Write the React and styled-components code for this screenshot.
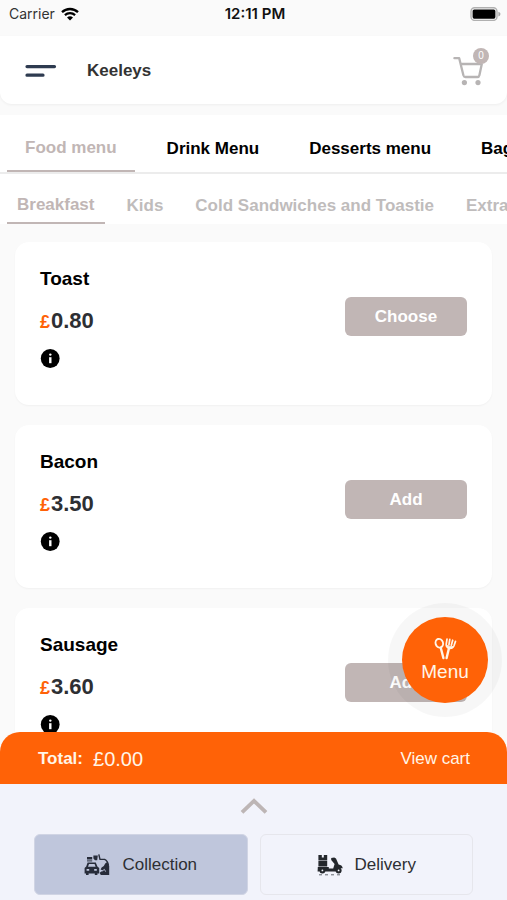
import React, { useState } from "react";
import styled, { createGlobalStyle } from "styled-components";

const Colors = {
  orange: "#ff6207",
  taupe: "#c1b6b5",
  mutedText: "#bfbcbc",
  page: "#fafafa",
  dock: "#f2f3fb",
  selected: "#bfc6dc",
  ink: "#2d2f33",
};

const menus = ["Food menu", "Drink Menu", "Desserts menu", "Bagels"];

const categories = ["Breakfast", "Kids", "Cold Sandwiches and Toastie", "Extras"];

const products = [
  { name: "Toast", price: "0.80", action: "Choose" },
  { name: "Bacon", price: "3.50", action: "Add" },
  { name: "Sausage", price: "3.60", action: "Add" },
];

const WifiIcon = () => (
  <svg width="18" height="14" viewBox="0 0 18 14" fill="none" aria-hidden="true">
    <path d="M1 5.2a11.6 11.6 0 0 1 16 0" stroke="#000" strokeWidth="2.3" />
    <path d="M3.9 8.1a7.4 7.4 0 0 1 10.2 0" stroke="#000" strokeWidth="2.2" />
    <path d="M9 13.6 6 10.6a4.3 4.3 0 0 1 6 0z" fill="#000" />
  </svg>
);

const BatteryIcon = () => (
  <svg width="31" height="14" viewBox="0 0 31 14" aria-hidden="true">
    <rect x="1" y="0.8" width="26" height="12.6" rx="3.6" fill="#fafafa" stroke="#b0b0b0" strokeWidth="1.4" />
    <rect x="2.6" y="2.5" width="22.8" height="9.2" rx="1.6" fill="#000" />
    <path d="M28.4 4.8c1.4.5 2 1.2 2 2.3s-.6 1.8-2 2.3z" fill="#a8a8a8" />
  </svg>
);

const BarsIcon = () => (
  <svg width="32" height="14" viewBox="0 0 32 14" aria-hidden="true">
    <path d="M2 2.6h27.5M2 11.2h16" stroke="#2e3b50" strokeWidth="3.2" strokeLinecap="round" />
  </svg>
);

const CartIcon = () => (
  <svg width="32" height="30" viewBox="0 0 32 30" fill="none" aria-hidden="true">
    <path
      d="M1.4 2.2h4.8l4.2 17q.5 1.8 2 1.8h12q1.6 0 2-1.8L28.8 8H8"
      stroke="#b7b4b4"
      strokeWidth="2.3"
      strokeLinecap="round"
      strokeLinejoin="round"
    />
    <circle cx="11.4" cy="26.6" r="2.6" fill="#b7b4b4" />
    <circle cx="25" cy="26.6" r="2.6" fill="#b7b4b4" />
  </svg>
);

const InfoIcon = () => (
  <svg width="20" height="19" viewBox="0 0 20 19" aria-hidden="true">
    <circle cx="10.2" cy="9.5" r="9.4" fill="#000" />
    <circle cx="10.3" cy="5.6" r="1.2" fill="#fff" />
    <path d="M9.1 8.2h2.4v6H9.1z" fill="#fff" />
  </svg>
);

const CutleryIcon = () => (
  <svg width="24" height="24" viewBox="0 0 24 24" fill="none" stroke="#fff5e8" strokeLinecap="round" aria-hidden="true">
    <ellipse cx="6.3" cy="6.2" rx="3.7" ry="4.4" transform="rotate(-18 6.3 6.2)" strokeWidth="1.9" />
    <path d="M7.8 11 10.4 21" strokeWidth="2.4" />
    <path d="M16 11 13.6 21" strokeWidth="2.4" />
    <path
      d="M14 2.2 13.2 7.4q-.2 3 2.9 4 3.4.5 4.8-2.4l1.6-4.6M16.8 2.4l-.9 5.4M19.7 3.2l-1.4 5"
      strokeWidth="1.7"
      strokeLinejoin="round"
    />
    <path d="M13.8 8.4q3 1.6 6.8 1.2l-2 1.8h-3z" fill="#fff5e8" strokeWidth="0.8" />
  </svg>
);

const ChevronUpIcon = () => (
  <svg width="28" height="16" viewBox="0 0 28 16" fill="none" aria-hidden="true">
    <path d="M2 14.4 14 2.8l12 11.6" stroke="#bdb5b5" strokeWidth="3.8" />
  </svg>
);

const CollectionIcon = () => (
  <svg width="26" height="24" viewBox="0 0 26 24" fill="none" aria-hidden="true">
    <g fill="#272c3a">
      <path d="M3 4h5.2v2.4H3zM9.4 2.4h4.4l-.6 4.8H11L9.4 5.4z" />
      <path d="M3 7.4h5.2v1H3z" />
      <path
        fillRule="evenodd"
        d="M3.6 9.4h8.2l1.6 4.2 1.8 1.4v5.4h-1.8V22h-2.6v-1.6H4.6V22H2v-1.6H.6V15l1.6-1.4zM5 11l-1 2.8h7.6l-1-2.8zM2.6 16v1.8h2.6V16zm7.6 0v1.8h2.6V16z"
      />
      <path d="M17.6 14.6q2.6-1.2 3.6-4.2l2-1.4 2 4V22h-8.4l-1.2-2.2 3.4-2.2-2.4-1z" />
    </g>
    <path d="M14.8 1.4 16 6.4h4.6q3.2 1.4 3.8 6" stroke="#272c3a" strokeWidth="1.4" />
    <path d="M18 18.2l2.4-1.8 1.2 2.2" stroke="#bfc6dc" strokeWidth="0.9" />
  </svg>
);

const DeliveryIcon = () => (
  <svg width="26" height="22" viewBox="0 0 26 22" fill="none" aria-hidden="true">
    <g fill="#24272c">
      <path fillRule="evenodd" d="M1.4 1h8.8v11.4H1.4zM4.8 1v2.6h2V1zM1.4 6.4v.6h8.8v-.6z" />
      <path d="M.8 13h11v1.4h4.4L17.6 10l-3.4-4V4l3-.6 1.8 1 2.6 6.2q3.4.4 4.2 3.6H22l-2.4 3.4H7.8L5 15l-2.6 2.6H.6z" />
      <circle cx="5.4" cy="16.4" r="3" />
      <circle cx="21.6" cy="16.4" r="3" />
    </g>
    <circle cx="5.4" cy="16.4" r="0.9" fill="#f2f3fb" />
    <circle cx="21.6" cy="16.4" r="0.9" fill="#f2f3fb" />
    <path d="M2 20.8h23" stroke="#55585e" strokeWidth="0.9" strokeDasharray="3 3" />
  </svg>
);

const Product = ({ product }) => (
  <Card>
    <div>
      <ProductName>{product.name}</ProductName>
      <Price>
        <Currency>£</Currency>
        {product.price}
      </Price>
      <IconButton aria-label={`About ${product.name}`}>
        <InfoIcon />
      </IconButton>
    </div>
    <ActionButton>{product.action}</ActionButton>
  </Card>
);

export default function App() {
  const [menu, setMenu] = useState(menus[0]);
  const [category, setCategory] = useState(categories[0]);
  const [service, setService] = useState("Collection");

  return (
    <Screen>
      <GlobalStyle />
      <StatusBar>
        <Carrier>
          Carrier <WifiIcon />
        </Carrier>
        <Clock>12:11 PM</Clock>
        <Battery>
          <BatteryIcon />
        </Battery>
      </StatusBar>

      <Header>
        <IconButton aria-label="Open navigation">
          <BarsIcon />
        </IconButton>
        <Title>Keeleys</Title>
        <CartButton aria-label="Cart">
          <CartIcon />
          <Badge>0</Badge>
        </CartButton>
      </Header>

      <MenuTabs>
        {menus.map((m) => (
          <MenuTab key={m} $active={m === menu} onClick={() => setMenu(m)}>
            {m}
          </MenuTab>
        ))}
      </MenuTabs>
      <CategoryTabs>
        {categories.map((c) => (
          <CategoryTab key={c} $active={c === category} onClick={() => setCategory(c)}>
            {c}
          </CategoryTab>
        ))}
      </CategoryTabs>

      <ProductList>
        {products.map((p) => (
          <Product key={p.name} product={p} />
        ))}
      </ProductList>

      <Dock>
        <MenuHalo>
          <MenuButton>
            <CutleryIcon />
            Menu
          </MenuButton>
        </MenuHalo>
        <TotalBar>
          <TotalLabel>Total:</TotalLabel>
          <TotalValue>£0.00</TotalValue>
          <CartLink href="#cart">View cart</CartLink>
        </TotalBar>
        <ServicePanel>
          <Expand aria-label="Expand">
            <ChevronUpIcon />
          </Expand>
          <Services>
            <ServiceButton $active={service === "Collection"} onClick={() => setService("Collection")}>
              <CollectionIcon />
              Collection
            </ServiceButton>
            <ServiceButton $active={service === "Delivery"} onClick={() => setService("Delivery")}>
              <DeliveryIcon />
              Delivery
            </ServiceButton>
          </Services>
        </ServicePanel>
      </Dock>
    </Screen>
  );
}

const GlobalStyle = createGlobalStyle`
  * {
    box-sizing: border-box;
  }

  body {
    margin: 0;
    background: ${Colors.page};
    font-family: "Liberation Sans", Arial, sans-serif;
    font-size: 17px;
  }

  button {
    padding: 0;
    border: 0;
    background: none;
    font: inherit;
    cursor: pointer;
  }

  svg {
    display: block;
    flex: none;
  }
`;

const Screen = styled.div`
  display: flex;
  flex-direction: column;
  height: 100vh;
  overflow: hidden;
`;

const StatusBar = styled.div`
  display: grid;
  grid-template-columns: 1fr auto 1fr;
  align-items: center;
  flex: none;
  height: 36px;
  padding: 0 6px 9px 9px;
  font-family: Inter, sans-serif;
  font-size: 14px;
  color: #111;
`;

const Carrier = styled.span`
  display: flex;
  align-items: center;
  gap: 6px;
  color: #333;
`;

const Clock = styled.span`
  font-size: 15px;
  font-weight: 600;
`;

const Battery = styled.span`
  justify-self: end;
`;

const Header = styled.header`
  display: flex;
  align-items: center;
  flex: none;
  height: 68px;
  margin-bottom: 11px;
  padding: 2px 22px 0 25px;
  border-radius: 0 0 12px 12px;
  background: #fff;
  box-shadow: 0 1px 3px rgba(0, 0, 0, 0.05);
`;

const IconButton = styled.button`
  display: block;
`;

const Title = styled.h1`
  flex: 1;
  margin: 0 0 0 30px;
  font-size: 17px;
  color: #333;
`;

const CartButton = styled.button`
  position: relative;
`;

const Badge = styled.span`
  position: absolute;
  top: -8px;
  right: -4px;
  width: 16px;
  height: 16px;
  border-radius: 50%;
  background: ${Colors.taupe};
  color: #fff;
  font-size: 10px;
  line-height: 16px;
  text-align: center;
`;

const Tabs = styled.nav`
  display: flex;
  flex: none;
  padding: 0 7px;
  overflow-x: auto;
  scrollbar-width: none;
  background: #fff;
`;

const MenuTabs = styled(Tabs)`
  gap: 14px;
  height: 59px;
  border-bottom: 2px solid #ececec;
`;

const CategoryTabs = styled(Tabs)`
  gap: 12px;
  height: 50px;
  padding-top: 10px;
`;

const Tab = styled.button`
  flex: none;
  font-weight: bold;
  white-space: nowrap;
  border-bottom: ${({ $active }) => ($active ? `2px solid ${Colors.taupe}` : "0")};
`;

const MenuTab = styled(Tab)`
  padding: 11px 18px 0;
  color: ${({ $active }) => ($active ? Colors.taupe : "#000")};
`;

const CategoryTab = styled(Tab)`
  padding: 4px 10px 0;
  color: ${({ $active }) => ($active ? Colors.taupe : Colors.mutedText)};
`;

const ProductList = styled.main`
  display: flex;
  flex-direction: column;
  flex: 1;
  gap: 20px;
  min-height: 0;
  padding: 18px 15px 20px;
  overflow-y: auto;
  scrollbar-width: none;
`;

const Card = styled.article`
  display: flex;
  align-items: center;
  justify-content: space-between;
  flex: none;
  padding: 23px 25px 37px;
  border-radius: 14px;
  background: #fff;
  box-shadow: 0 1px 2px rgba(0, 0, 0, 0.04);
`;

const ProductName = styled.h2`
  margin: 0 0 14px;
  font-size: 19px;
  line-height: 28px;
  color: #000;
`;

const Price = styled.p`
  margin: 0 0 14px;
  font-size: 22px;
  font-weight: bold;
  line-height: 28px;
  color: ${Colors.ink};
`;

const Currency = styled.span`
  margin-right: 1px;
  font-size: 18px;
  line-height: 1;
  color: ${Colors.orange};
`;

const ActionButton = styled.button`
  width: 122px;
  height: 39px;
  border-radius: 6px;
  background: ${Colors.taupe};
  color: #fff;
  font-weight: bold;
`;

const Dock = styled.footer`
  position: relative;
  flex: none;
  margin-top: -20px;
`;

const MenuHalo = styled.div`
  position: absolute;
  right: 5px;
  bottom: calc(100% + 15px);
  padding: 14px;
  border-radius: 50%;
  background: rgba(0, 0, 0, 0.03);
`;

const MenuButton = styled.button`
  display: flex;
  flex-direction: column;
  align-items: center;
  justify-content: center;
  width: 86px;
  height: 86px;
  border-radius: 50%;
  background: ${Colors.orange};
  color: #fff5e8;
  font-size: 19px;
`;

const TotalBar = styled.div`
  display: flex;
  align-items: center;
  height: 52px;
  padding: 2px 37px 0 38px;
  border-radius: 20px 20px 0 0;
  background: ${Colors.orange};
  color: #fff5e8;
`;

const TotalLabel = styled.strong`
  margin-right: 10px;
`;

const TotalValue = styled.span`
  flex: 1;
  font-size: 20px;
`;

const CartLink = styled.a`
  color: inherit;
  text-decoration: none;
`;

const ServicePanel = styled.div`
  padding: 14px 34px 5px;
  background: ${Colors.dock};
`;

const Expand = styled.button`
  display: block;
  margin: 0 auto 20px;
`;

const Services = styled.div`
  display: grid;
  grid-template-columns: 1fr 1fr;
  gap: 12px;
`;

const ServiceButton = styled.button`
  display: flex;
  align-items: center;
  justify-content: center;
  gap: 12px;
  height: 61px;
  border: 1px solid ${({ $active }) => ($active ? "#d0d4e4" : "#e6e6ec")};
  border-radius: 6px;
  background: ${({ $active }) => ($active ? Colors.selected : Colors.dock)};
  color: ${Colors.ink};
`;
